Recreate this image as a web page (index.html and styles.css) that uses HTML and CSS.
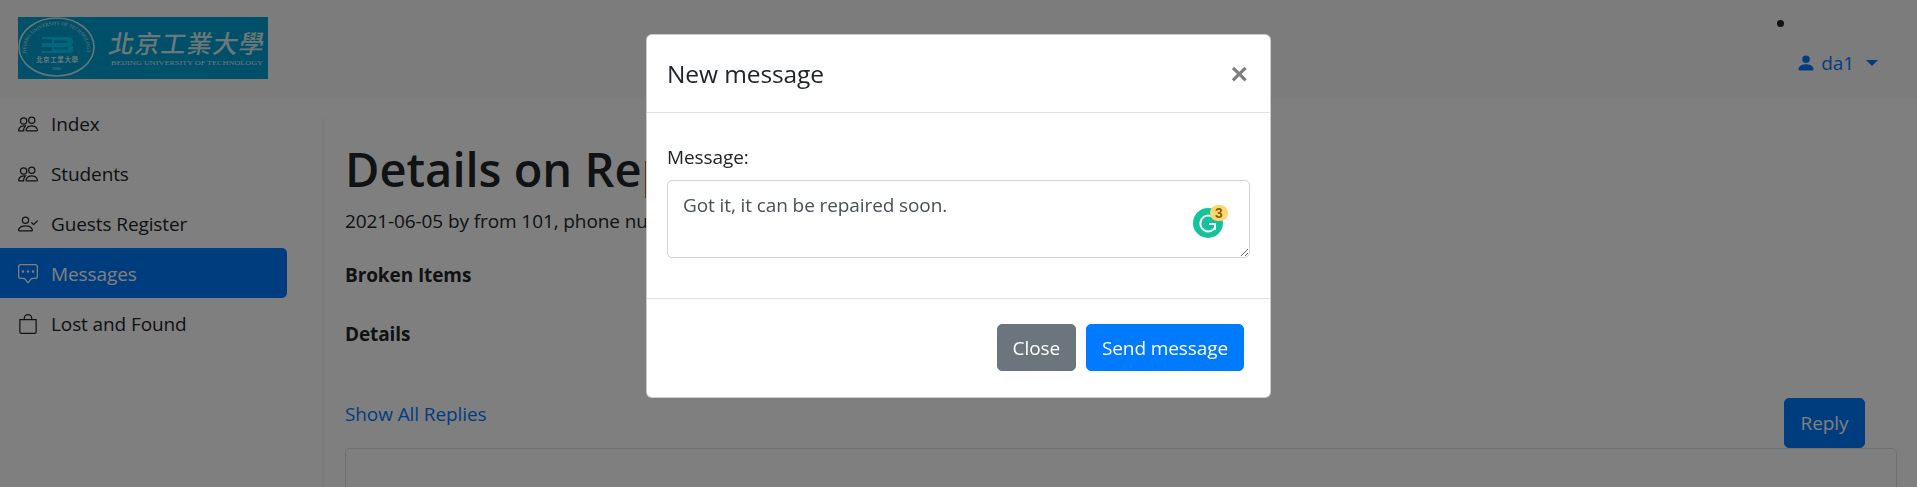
FILE: index.html
```html
<!DOCTYPE html>
<html lang="en">
<head>
<meta charset="utf-8">
<title>Details on Repairs</title>
<link rel="stylesheet" href="styles.css">
</head>
<body>
<header class="topbar">
  <svg class="logo" viewBox="0 0 250 62" width="250" height="62" aria-label="Beijing University of Technology">
    <rect width="250" height="62" fill="#00a0d2"/>
    <ellipse cx="38.5" cy="30" rx="37.5" ry="29" fill="none" stroke="#cfe8ee" stroke-width="1.6"/>
    <path id="ring" d="M12 44A30.500 24 0 1 1 65 44" fill="none"/>
    <text class="logo-ring" text-anchor="middle"><textPath href="#ring" startOffset="50%">BEIJING UNIVERSITY OF TECHNOLOGY</textPath></text>
    <path d="M24 20h26q5 0 5 4v1q0 3-3 3 3 0 3 3v1q0 4-5 4H24v-2h10v-4H24v-4h10v-4H24z" fill="#00d0f8"/>
    <path d="M36 23.500h14v2.500H36zM36 30h14v2.500H36z" fill="#00a0d2"/>
    <text class="logo-mini" x="39" y="45" text-anchor="middle" textLength="42">北京工業大學</text>
    <text class="logo-year" x="38.500" y="53" text-anchor="middle">1960</text>
    <text class="logo-cn" transform="skewX(-10) translate(6 0)" x="90" y="36" textLength="155" lengthAdjust="spacing">北京工業大學</text>
    <text class="logo-en" x="93" y="48" textLength="152" lengthAdjust="spacingAndGlyphs">BEIJING UNIVERSITY OF TECHNOLOGY</text>
  </svg>
  <div class="user-area">
    <span class="dot"></span>
    <a class="user-link" href="#">
      <svg class="bi" viewBox="0 0 16 16" width="20" height="20"><path d="M3 14s-1 0-1-1 1-4 6-4 6 3 6 4-1 1-1 1H3zm5-6a3 3 0 1 0 0-6 3 3 0 0 0 0 6z"/></svg>
      <span class="user-name">da1</span>
      <span class="caret"></span>
    </a>
  </div>
</header>
<div class="layout">
  <nav class="sidebar">
    <a class="nav-item" href="#"><svg class="bi" viewBox="0 0 16 16" width="20" height="20"><path d="M15 14s1 0 1-1-1-4-5-4-5 3-5 4 1 1 1 1h8zm-7.978-1A.261.261 0 0 1 7 12.996c.001-.264.167-1.03.76-1.72C8.312 10.629 9.282 10 11 10c1.717 0 2.687.63 3.24 1.276.593.69.758 1.457.76 1.72l-.008.002a.274.274 0 0 1-.014.002H7.022zM11 7a2 2 0 1 0 0-4 2 2 0 0 0 0 4zm3-2a3 3 0 1 1-6 0 3 3 0 0 1 6 0zM6.936 9.28a5.88 5.88 0 0 0-1.23-.247A7.35 7.35 0 0 0 5 9c-4 0-5 3-5 4 0 .667.333 1 1 1h4.216A2.238 2.238 0 0 1 5 13c0-1.01.377-2.042 1.09-2.904.243-.294.526-.569.846-.816zM4.920 10A5.493 5.493 0 0 0 4 13H1c0-.26.164-1.03.76-1.724.545-.636 1.492-1.256 3.16-1.275zM1.500 5.500a3 3 0 1 1 6 0 3 3 0 0 1-6 0zm3-2a2 2 0 1 0 0 4 2 2 0 0 0 0-4z"/></svg>Index</a>
    <a class="nav-item" href="#"><svg class="bi" viewBox="0 0 16 16" width="20" height="20"><path d="M15 14s1 0 1-1-1-4-5-4-5 3-5 4 1 1 1 1h8zm-7.978-1A.261.261 0 0 1 7 12.996c.001-.264.167-1.03.76-1.72C8.312 10.629 9.282 10 11 10c1.717 0 2.687.63 3.24 1.276.593.69.758 1.457.76 1.72l-.008.002a.274.274 0 0 1-.014.002H7.022zM11 7a2 2 0 1 0 0-4 2 2 0 0 0 0 4zm3-2a3 3 0 1 1-6 0 3 3 0 0 1 6 0zM6.936 9.28a5.88 5.88 0 0 0-1.23-.247A7.35 7.35 0 0 0 5 9c-4 0-5 3-5 4 0 .667.333 1 1 1h4.216A2.238 2.238 0 0 1 5 13c0-1.01.377-2.042 1.09-2.904.243-.294.526-.569.846-.816zM4.920 10A5.493 5.493 0 0 0 4 13H1c0-.26.164-1.03.76-1.724.545-.636 1.492-1.256 3.16-1.275zM1.500 5.500a3 3 0 1 1 6 0 3 3 0 0 1-6 0zm3-2a2 2 0 1 0 0 4 2 2 0 0 0 0-4z"/></svg>Students</a>
    <a class="nav-item" href="#"><svg class="bi" viewBox="0 0 16 16" width="20" height="20"><path d="M6 8a3 3 0 1 0 0-6 3 3 0 0 0 0 6zm2-3a2 2 0 1 1-4 0 2 2 0 0 1 4 0zm4 8c0 1-1 1-1 1H1s-1 0-1-1 1-4 6-4 6 3 6 4zm-1-.004c-.001-.246-.154-.986-.832-1.664C9.516 10.680 8.289 10 6 10c-2.290 0-3.516.680-4.168 1.332-.678.678-.830 1.418-.832 1.664h10z"/><path d="M15.854 5.146a.500.500 0 0 1 0 .708l-3 3a.500.500 0 0 1-.708 0l-1.500-1.500a.500.500 0 0 1 .708-.708L12.500 7.793l2.646-2.647a.500.500 0 0 1 .708 0z"/></svg>Guests Register</a>
    <a class="nav-item active" href="#"><svg class="bi" viewBox="0 0 16 16" width="20" height="20"><path d="M14 1a1 1 0 0 1 1 1v8a1 1 0 0 1-1 1h-2.500a2 2 0 0 0-1.600.8L8 14.333 6.100 11.800a2 2 0 0 0-1.600-.8H2a1 1 0 0 1-1-1V2a1 1 0 0 1 1-1h12zM2 0a2 2 0 0 0-2 2v8a2 2 0 0 0 2 2h2.500a1 1 0 0 1 .8.4l1.900 2.533a1 1 0 0 0 1.600 0l1.900-2.533a1 1 0 0 1 .8-.4H14a2 2 0 0 0 2-2V2a2 2 0 0 0-2-2H2z"/><path d="M5 6a1 1 0 1 1-2 0 1 1 0 0 1 2 0zm4 0a1 1 0 1 1-2 0 1 1 0 0 1 2 0zm4 0a1 1 0 1 1-2 0 1 1 0 0 1 2 0z"/></svg>Messages</a>
    <a class="nav-item" href="#"><svg class="bi" viewBox="0 0 16 16" width="20" height="20"><path d="M8 1a2.500 2.500 0 0 1 2.500 2.500V4h-5v-.5A2.500 2.500 0 0 1 8 1zm3.500 3v-.5a3.500 3.500 0 1 0-7 0V4H1v10a2 2 0 0 0 2 2h10a2 2 0 0 0 2-2V4h-3.500zM2 5h12v9a1 1 0 0 1-1 1H3a1 1 0 0 1-1-1V5z"/></svg>Lost and Found</a>
  </nav>
  <main class="content">
    <h1 class="title">Details on Repairs</h1>
    <p class="meta">2021-06-05 by from 101, phone number</p>
    <p class="label">Broken Items</p>
    <p class="label">Details</p>
    <div class="reply-row">
      <a class="replies-link" href="#">Show All Replies</a>
      <button class="btn btn-primary reply-btn" type="button">Reply</button>
    </div>
    <div class="card"></div>
  </main>
</div>
<div class="backdrop"></div>
<section class="modal">
  <div class="modal-header">
    <h5 class="modal-title">New message</h5>
    <button class="modal-close" type="button">×</button>
  </div>
  <div class="modal-body">
    <label class="field-label" for="msg">Message:</label>
    <div class="field-wrap">
      <textarea class="field" id="msg">Got it, it can be repaired soon.</textarea>
      <span class="grammarly">
        <svg viewBox="0 0 30 30" width="30" height="30"><circle cx="15" cy="15" r="15" fill="#15c39a"/><path d="M20 9a8 8 0 1 0 2.500 10M16 16h6v6" fill="none" stroke="#fff" stroke-width="2"/></svg>
        <span class="grammarly-badge">3</span>
      </span>
    </div>
  </div>
  <div class="modal-footer">
    <button class="btn btn-secondary" type="button">Close</button>
    <button class="btn btn-primary" type="button">Send message</button>
  </div>
</section>
</body>
</html>
```
FILE: styles.css
```css
* { box-sizing: border-box; }
html, body { margin: 0; height: 100%; overflow: hidden; }
body {
  background: #fff;
  color: #212529;
  font-family: "Open Sans", "Noto Sans", sans-serif;
  font-size: 19px;
  letter-spacing: -.1px;
  line-height: 30px;
}
a { color: #007bff; text-decoration: none; }
.bi { fill: currentColor; flex: none; display: block; }

.topbar {
  height: 98px;
  background: #f8f9fa;
  display: flex;
  justify-content: space-between;
  padding: 17px 39px 0 18px;
}
.logo { display: block; letter-spacing: 0; }
.logo-cn { font-family: "Noto Sans CJK TC", sans-serif; font-size: 25px; font-weight: 500; fill: #d8eef3; }
.logo-mini { font-family: "Noto Sans CJK TC", sans-serif; font-size: 6.5px; font-weight: 700; fill: #d8eef3; }
.logo-en { font-family: "Liberation Serif", serif; font-size: 6.5px; fill: #d8eef3; }
.logo-ring { font-family: "Liberation Serif", serif; font-size: 5px; fill: #d8eef3; }
.logo-year { font-family: "Liberation Sans", sans-serif; font-size: 4px; fill: #d8eef3; }
.user-area { display: flex; flex-direction: column; padding-top: 3px; width: 101px; }
.dot { width: 7px; height: 7px; border-radius: 50%; background: #212529; margin-bottom: 21px; }
.user-link { display: flex; align-items: center; justify-content: flex-end; gap: 7px; }
.user-name { margin-left: -2px; }
.caret { width: 0; height: 0; margin-left: 5px; border-top: 6px solid currentColor; border-left: 6px solid transparent; border-right: 6px solid transparent; }

.layout { display: flex; height: 389px; }
.sidebar { flex: 0 0 323px; padding-right: 36px; }
.nav-item { display: flex; align-items: center; gap: 13px; height: 50px; padding: 2px 0 0 18px; color: #212529; border-radius: 0 5px 5px 0; }
.nav-item.active { background: #007bff; color: #fff; }

.content { flex: 1; min-width: 0; margin-top: 20px; padding: 0 20px 0 21px; border-left: 1px solid #f2f2f2; border-top: 1px solid #fafafa; box-shadow: -2px 0 3px rgba(0,0,0,.02); }
.title { margin: 0; padding-top: 20px; font-size: 47px; line-height: 60px; font-weight: 600; letter-spacing: 0; }
.meta { margin: 0; padding-top: 7px; }
.label { margin: 0; padding-top: 24px; font-weight: 700; }
.label + .label { padding-top: 29px; }
.reply-row { display: flex; justify-content: space-between; align-items: flex-start; padding: 49px 32px 0 0; }
.replies-link { padding-top: 1px; }
.card { height: 120px; border: 1px solid rgba(0,0,0,.125); border-radius: 5px; }

.btn { font: inherit; letter-spacing: inherit; border: 1px solid transparent; border-radius: 5px; padding: 7.5px 15px; height: 47px; color: #fff; }
.btn-primary { background: #007bff; border-color: #007bff; }
.btn-secondary { background: #6c757d; border-color: #6c757d; }
.reply-btn { height: 50px; width: 81px; padding: 0; }

.backdrop { position: fixed; inset: 0; background: rgba(0,0,0,.5); }
.modal {
  position: fixed; top: 34px; left: 0; right: 0; margin: 0 auto; width: 625px;
  background: #fff; border: 1px solid rgba(0,0,0,.2); border-radius: 6px;
}
.modal-header { display: flex; justify-content: space-between; height: 78px; padding: 20px 22px 20px 20px; border-bottom: 1px solid #dee2e6; }
.modal-title { margin: 0; font-size: 24.5px; line-height: 37.5px; font-weight: 500; }
.modal-close { background: none; border: 0; padding: 0; font: 700 30px/30px "Liberation Sans", sans-serif; color: #000; opacity: .5; }
.modal-body { padding: 29px 20px 20px; }
.field-label { display: block; margin-bottom: 8px; }
.field-wrap { position: relative; height: 78px; margin-bottom: 20px; }
.field { display: block; width: 100%; height: 78px; padding: 8.5px 15px 6.5px; border: 1px solid #ced4da; border-radius: 5px; font: inherit; letter-spacing: inherit; color: #495057; background: #fff; }
.grammarly { position: absolute; right: 27px; top: 28px; width: 30px; height: 30px; }
.grammarly svg { display: block; }
.grammarly-badge {
  position: absolute; right: -5px; top: -3px; width: 18px; height: 16px; border-radius: 8px;
  background: #fed66f; color: #8a5a00; font: 700 14px/16px "Liberation Sans", sans-serif; letter-spacing: 0; text-align: center;
}
.modal-footer { display: flex; justify-content: flex-end; gap: 10px; padding: 25px 26px 26px 25px; border-top: 1px solid #dee2e6; }
```
